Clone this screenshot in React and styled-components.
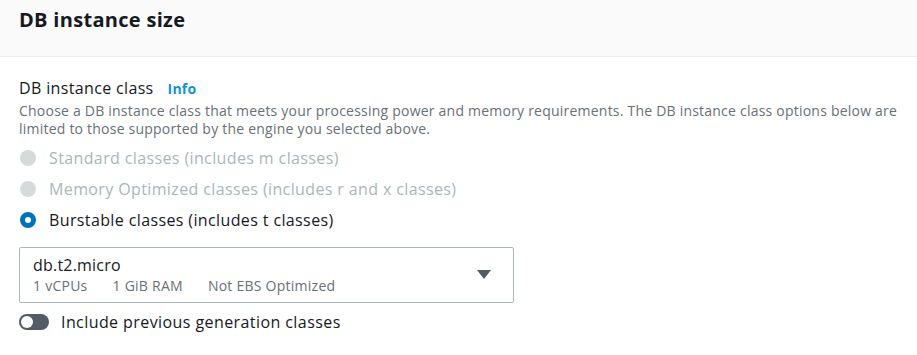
import React from "react";
import styled, { createGlobalStyle } from "styled-components";

const Global = createGlobalStyle`
  html, body { margin: 0; padding: 0; background: #ffffff; }
  body { font-family: "Open Sans", "Noto Sans", sans-serif; color: #16191f; }
  * { box-sizing: border-box; }
`;

const Panel = styled.div`
  width: 917px;
  height: 355px;
  background: #ffffff;
  overflow: hidden;
`;

const Header = styled.div`
  background: #fafafa;
  border-bottom: 1px solid #eaeded;
  padding: 6px 19px 22px;
`;

const Title = styled.h2`
  margin: 0;
  font-size: 20px;
  line-height: 28px;
  font-weight: 700;
  letter-spacing: 0.3px;
  color: #16191f;
`;

const Body = styled.div`
  padding: 20px 10px 0 19px;
  display: flex;
  flex-direction: column;
`;

const LabelRow = styled.div`
  display: flex;
  align-items: baseline;
  gap: 14px;
  font-size: 16px;
  line-height: 22px;
  letter-spacing: 0.35px;
`;

const InfoLink = styled.a`
  font-size: 14px;
  font-weight: 700;
  letter-spacing: 0.2px;
  color: #1592cf;
  text-decoration: none;
`;

const Description = styled.p`
  margin: 2px 0 0;
  font-size: 14px;
  line-height: 18px;
  letter-spacing: 0.22px;
  color: #687078;
`;

const RadioGroup = styled.div`
  display: flex;
  flex-direction: column;
  gap: 9px;
  margin-top: 9px;
`;

const RadioRow = styled.label`
  display: flex;
  align-items: center;
  gap: 13px;
  font-size: 16px;
  line-height: 22px;
  letter-spacing: 0.38px;
  color: ${(p) => (p.$disabled ? "#aab7b8" : "#16191f")};
`;

const RadioDot = styled.span`
  width: 16px;
  height: 16px;
  margin-left: 1px;
  border-radius: 50%;
  flex: none;
  background: ${(p) => (p.$checked ? "#ffffff" : "#d5dbdb")};
  border: ${(p) => (p.$checked ? "5px solid #0073bb" : "none")};
`;

const Select = styled.div`
  margin-top: 16px;
  width: 495px;
  height: 56px;
  border: 1px solid #aab7b8;
  border-radius: 2px;
  padding: 6px 13px 0;
  display: flex;
  align-items: flex-start;
  justify-content: space-between;
`;

const SelectText = styled.div`
  display: flex;
  flex-direction: column;
`;

const SelectValue = styled.div`
  font-size: 16px;
  line-height: 22px;
  letter-spacing: 0.2px;
  color: #16191f;
`;

const Tags = styled.div`
  display: flex;
  gap: 25px;
  font-size: 14px;
  line-height: 20px;
  letter-spacing: 0.25px;
  color: #687078;
`;

const Caret = styled.svg`
  margin-top: 16px;
  margin-right: 9px;
  flex: none;
`;

const ToggleRow = styled.div`
  margin-top: 8px;
  display: flex;
  align-items: center;
  gap: 12px;
  font-size: 16px;
  line-height: 22px;
  letter-spacing: 0.42px;
  color: #16191f;
`;

const Toggle = styled.span`
  width: 30px;
  height: 16px;
  border-radius: 8px;
  background: #545b64;
  display: flex;
  align-items: center;
  padding: 2px;
  flex: none;
`;

const Knob = styled.span`
  width: 12px;
  height: 12px;
  border-radius: 50%;
  background: #ffffff;
`;

export default function App() {
  return (
    <>
      <Global />
      <Panel>
        <Header>
          <Title>DB instance size</Title>
        </Header>
        <Body>
          <LabelRow>
            <span>DB instance class</span>
            <InfoLink href="#">Info</InfoLink>
          </LabelRow>
          <Description>
            Choose a DB instance class that meets your processing power and memory requirements. The DB instance class options below are limited to those supported by the engine you selected above.
          </Description>
          <RadioGroup>
            <RadioRow $disabled>
              <RadioDot />
              Standard classes (includes m classes)
            </RadioRow>
            <RadioRow $disabled>
              <RadioDot />
              Memory Optimized classes (includes r and x classes)
            </RadioRow>
            <RadioRow>
              <RadioDot $checked />
              Burstable classes (includes t classes)
            </RadioRow>
          </RadioGroup>
          <Select>
            <SelectText>
              <SelectValue>db.t2.micro</SelectValue>
              <Tags>
                <span>1 vCPUs</span>
                <span>1 GiB RAM</span>
                <span>Not EBS Optimized</span>
              </Tags>
            </SelectText>
            <Caret width="14" height="9" viewBox="0 0 14 9">
              <path d="M0 0 H14 L7 9 Z" fill="#545b64" />
            </Caret>
          </Select>
          <ToggleRow>
            <Toggle>
              <Knob />
            </Toggle>
            Include previous generation classes
          </ToggleRow>
        </Body>
      </Panel>
    </>
  );
}
